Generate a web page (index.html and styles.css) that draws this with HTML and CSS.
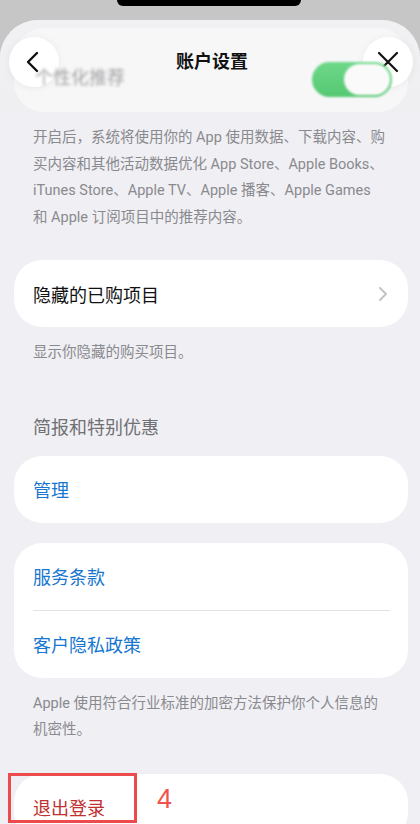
FILE: index.html
```html
<!DOCTYPE html>
<html lang="zh-CN">
<head>
  <meta charset="UTF-8">
  <title>账户设置</title>
  <link rel="stylesheet" href="styles.css">
</head>
<body>

  <!-- STATUS AREA -->
  <div class="top">
    <div class="island"></div>
  </div>

  <div class="sheet">

    <!-- NAV BAR over the blurred toggle row -->
    <div class="header">
      <div class="under">
        <span class="under-label">个性化推荐</span>
        <span class="toggle"><span class="knob"></span></span>
      </div>
      <div class="nav">
        <button class="round" aria-label="返回">
          <svg width="24" height="24" viewBox="0 0 24 24"><path d="M15 3 L6 12 L15 21" fill="none" stroke="#111" stroke-width="2.4" stroke-linecap="round" stroke-linejoin="round"/></svg>
        </button>
        <h1>账户设置</h1>
        <button class="round" aria-label="关闭">
          <svg width="24" height="24" viewBox="0 0 24 24"><path d="M3 3 L21 21 M21 3 L3 21" fill="none" stroke="#111" stroke-width="2.2" stroke-linecap="round"/></svg>
        </button>
      </div>
    </div>

    <p class="note first">开启后，系统将使用你的 App 使用数据、下载内容、购买内容和其他活动数据优化 App Store、Apple Books、iTunes Store、Apple TV、Apple 播客、Apple Games 和 Apple 订阅项目中的推荐内容。</p>

    <div class="group gap-first">
      <div class="row">
        <span>隐藏的已购项目</span>
        <svg class="chevron" width="10" height="16" viewBox="0 0 10 16"><path d="M2 2 L8 8 L2 14" fill="none" stroke="#c4c4c8" stroke-width="2" stroke-linecap="round" stroke-linejoin="round"/></svg>
      </div>
    </div>
    <p class="note">显示你隐藏的购买项目。</p>

    <h2 class="section">简报和特别优惠</h2>
    <div class="group gap-sm">
      <div class="row link">管理</div>
    </div>

    <div class="group gap-md">
      <div class="row link">服务条款</div>
      <div class="divider"></div>
      <div class="row link">客户隐私政策</div>
    </div>
    <p class="note">Apple 使用符合行业标准的加密方法保护你个人信息的机密性。</p>

    <div class="group gap-lg logout">
      <div class="row danger">退出登录</div>
      <div class="mark"></div>
      <span class="mark-num">4</span>
    </div>

  </div>

</body>
</html>
```

FILE: styles.css
```css
:root {
  --bg-color: #efeff4;
  --card-color: #ffffff;
  --text-color: #111111;
  --muted: #8a8a8e;
  --link: #1676d0;
  --danger: #bf3131;
  --mark: #ec4a4d;
}
body {
  font-family: Roboto, "Noto Sans CJK SC", sans-serif;
  margin: 0;
  padding: 0;
  background: #c6c6c6;
  color: var(--text-color);
  overflow: hidden;
}
.top {
  height: 20px;
  display: flex;
  justify-content: center;
}
.island {
  width: 184px;
  height: 6px;
  background: #000;
  border-radius: 0 0 8px 8px;
  margin-left: -3px;
}
.sheet {
  background: var(--bg-color);
  border-radius: 38px 38px 0 0;
  min-height: 900px;
}

/* header */
.header {
  display: grid;
  height: 92px;
  background: linear-gradient(#f1f1f3, #efeff2);
  border-radius: 38px 38px 0 0;
}
.under, .nav {
  grid-area: 1 / 1;
}
.under {
  margin: 8px 12px 0 14px;
  height: 84px;
  background: #f7f7f8;
  border-radius: 30px;
  display: flex;
  align-items: flex-end;
  justify-content: space-between;
  padding: 0 18px 15px 21px;
  box-sizing: border-box;
}
.under-label {
  font-size: 18px;
  color: #a2a2a4;
  filter: blur(1.4px);
  line-height: 26px;
  margin-bottom: 6px;
}
.toggle {
  width: 80px;
  height: 35px;
  border-radius: 18px;
  background: linear-gradient(#6fd88a, #55c872);
  display: flex;
  justify-content: flex-end;
  align-items: center;
  padding: 0 2px;
  box-sizing: border-box;
  filter: blur(1px);
  margin-right: -2px;
}
.knob {
  width: 46px;
  height: 31px;
  border-radius: 16px;
  background: #fafafa;
}
.nav {
  display: flex;
  justify-content: space-between;
  align-items: flex-start;
  padding: 17px 7px 0 9px;
}
.nav h1 {
  margin: 0;
  font-size: 18px;
  font-weight: 600;
  line-height: 50px;
  color: #111;
  padding-left: 2px;
}
.round {
  width: 50px;
  height: 50px;
  border: none;
  border-radius: 50%;
  background: rgba(255, 255, 255, 0.96);
  box-shadow: 0 1px 8px rgba(0, 0, 0, 0.06);
  display: flex;
  align-items: center;
  justify-content: center;
  padding: 0;
}

/* content */
.note {
  margin: 13px 33px 0 33px;
  font-size: 14.5px;
  line-height: 26.5px;
  color: var(--muted);
}
.section {
  margin: 48px 33px 0;
  font-size: 18px;
  font-weight: 400;
  line-height: 26px;
  color: #707074;
}
.group {
  margin: 0 12px 0 14px;
  background: var(--card-color);
  border-radius: 28px;
}
.gap-first { margin-top: 29px; }
.gap-lg { margin-top: 30px; }
.gap-md { margin-top: 20px; }
.gap-sm { margin-top: 15px; }
.row {
  height: 67px;
  display: flex;
  align-items: center;
  justify-content: space-between;
  padding: 0 20px 0 19px;
  font-size: 18px;
}
.divider {
  height: 1px;
  background: #e3e3e7;
  margin: 0 18px 0 19px;
}
.link {
  color: var(--link);
}
.danger {
  color: var(--danger);
}
.logout {
  position: relative;
}
.mark {
  position: absolute;
  left: -6px;
  top: -1px;
  width: 129px;
  height: 50px;
  border: 3px solid var(--mark);
  box-sizing: border-box;
}
.mark-num {
  position: absolute;
  left: 143px;
  top: 10px;
  font-family: "Liberation Sans", sans-serif;
  font-size: 27px;
  line-height: 30px;
  color: #f0524d;
}
```
